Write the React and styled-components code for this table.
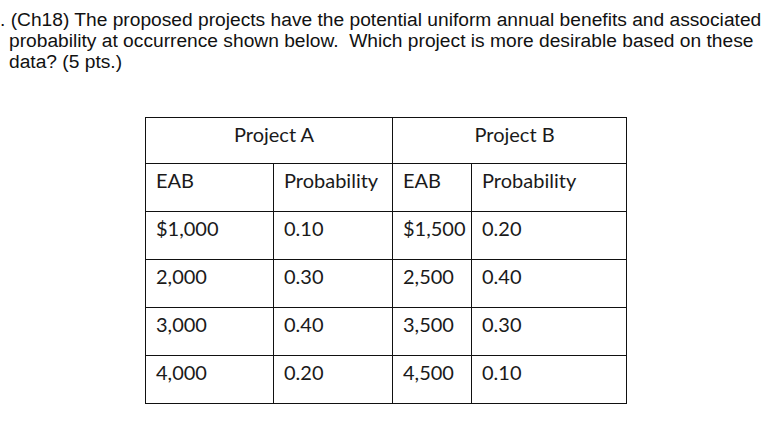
import React from 'react'
import styled, { createGlobalStyle } from 'styled-components'

const GlobalStyle = createGlobalStyle`
  html, body {
    margin: 0;
    padding: 0;
    background: #ffffff;
  }
`

const Page = styled.div`
  width: 771px;
  height: 429px;
  overflow: hidden;
  background: #fff;
`

const Question = styled.p`
  margin: 0;
  padding: 9px 0 0 9px;
  text-indent: -9px;
  font-family: 'Liberation Sans', Arial, sans-serif;
  font-size: 19.2px;
  line-height: 21px;
  color: #111;
  white-space: nowrap;
`

const Table = styled.table`
  margin: 45px 0 0 145px;
  border-collapse: collapse;
  table-layout: fixed;
  width: 482px;
  font-family: Lato, 'Open Sans', sans-serif;
  font-size: 20px;
  color: #1a1a1a;
`

const Row = styled.tr`
  height: ${props => props.$h}px;
`

const Cell = styled.td`
  border: 1px solid #111;
  padding: 4px 0 0 10px;
  vertical-align: top;
  line-height: 24px;
  text-align: ${props => (props.$center ? 'center' : 'left')};
`

const projects = [
  ['$1,000', '0.10', '$1,500', '0.20'],
  ['2,000', '0.30', '2,500', '0.40'],
  ['3,000', '0.40', '3,500', '0.30'],
  ['4,000', '0.20', '4,500', '0.10'],
]

export default function App() {
  return (
    <Page>
      <GlobalStyle />
      <Question>
        . (Ch18) The proposed projects have the potential uniform annual benefits and associated
        <br />
        probability at occurrence shown below.&nbsp; Which project is more desirable based on these
        <br />
        data? (5 pts.)
      </Question>
      <Table>
        <colgroup>
          <col style={{ width: 128 }} />
          <col style={{ width: 119 }} />
          <col style={{ width: 79 }} />
          <col style={{ width: 155 }} />
        </colgroup>
        <tbody>
          <Row $h={46}>
            <Cell colSpan={2} $center>Project A</Cell>
            <Cell colSpan={2} $center>Project B</Cell>
          </Row>
          <Row $h={48}>
            <Cell>EAB</Cell>
            <Cell>Probability</Cell>
            <Cell>EAB</Cell>
            <Cell>Probability</Cell>
          </Row>
          {projects.map(r => (
            <Row $h={48} key={r[0]}>
              {r.map((v, i) => (
                <Cell key={i}>{v}</Cell>
              ))}
            </Row>
          ))}
        </tbody>
      </Table>
    </Page>
  )
}
